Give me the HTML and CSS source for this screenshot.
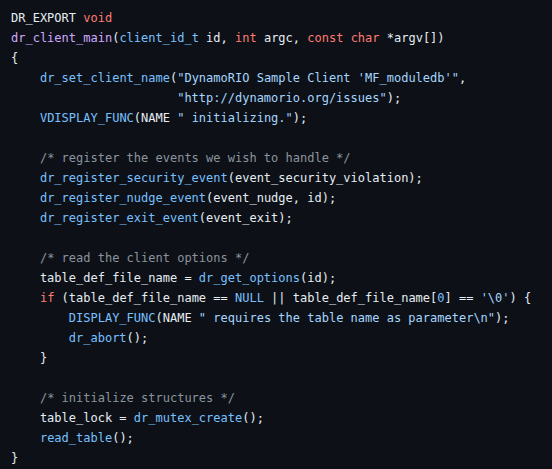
FILE: index.html
```html
<!DOCTYPE html>
<html>
<head>
<meta charset="utf-8">
<link rel="stylesheet" href="styles.css">
</head>
<body>
<pre class="code"><code><span class="n">DR_EXPORT</span> <span class="k">void</span>
<span class="f">dr_client_main</span>(<span class="c">client_id_t</span> id, <span class="k">int</span> argc, <span class="k">const</span> <span class="k">char</span> *argv[])
{
    <span class="c">dr_set_client_name</span>(<span class="s">"DynamoRIO Sample Client 'MF_moduledb'"</span>,
                       <span class="s">"http://dynamorio.org/issues"</span>);
    <span class="c">VDISPLAY_FUNC</span>(NAME <span class="s">" initializing."</span>);

    <span class="m">/* register the events we wish to handle */</span>
    <span class="c">dr_register_security_event</span>(event_security_violation);
    <span class="c">dr_register_nudge_event</span>(event_nudge, id);
    <span class="c">dr_register_exit_event</span>(event_exit);

    <span class="m">/* read the client options */</span>
    table_def_file_name = <span class="c">dr_get_options</span>(id);
    <span class="k">if</span> (table_def_file_name == <span class="c">NULL</span> || table_def_file_name[<span class="c">0</span>] == <span class="s">'\0'</span>) {
        <span class="c">DISPLAY_FUNC</span>(NAME <span class="s">" requires the table name as parameter\n"</span>);
        <span class="c">dr_abort</span>();
    }

    <span class="m">/* initialize structures */</span>
    table_lock = <span class="c">dr_mutex_create</span>();
    <span class="c">read_table</span>();
}</code></pre>
</body>
</html>
```
FILE: styles.css
```css
html, body {
  margin: 0;
  padding: 0;
  background: #0d1117;
}
.code {
  margin: 0;
  padding: 8px 11px;
  font-family: "DejaVu Sans Mono", monospace;
  font-size: 12px;
  line-height: 20px;
  color: #e6edf3;
  background: #0d1117;
  white-space: pre;
}
.k { color: #ff7b72; }
.f { color: #d2a8ff; }
.c { color: #79c0ff; }
.s { color: #a5d6ff; }
.m { color: #8b949e; }
.n { color: #e6edf3; }
```
